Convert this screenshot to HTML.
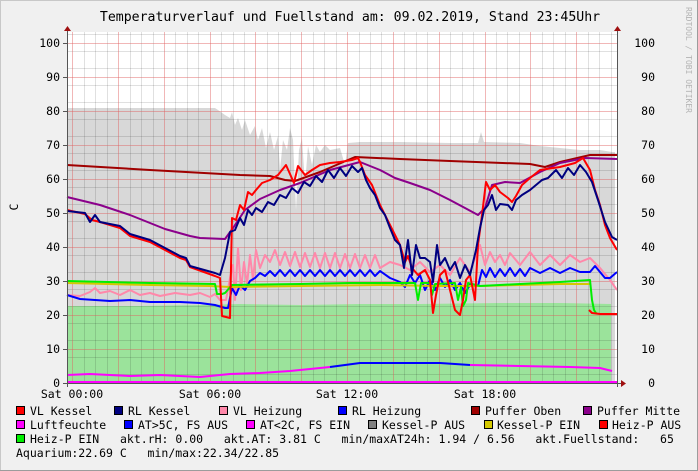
<!DOCTYPE html>
<html><head><meta charset="utf-8"><style>
html,body{margin:0;padding:0;background:#f0f0f0}
svg{display:block}
text{font-family:"DejaVu Sans Mono","Liberation Mono",monospace;fill:#000}
</style></head><body>
<svg width="698" height="471" viewBox="0 0 698 471" xmlns="http://www.w3.org/2000/svg">
<rect x="0" y="0" width="698" height="471" fill="#f0f0f0"/>
<rect x="0.5" y="0.5" width="697" height="470" fill="none" stroke="#c8c8c8"/>
<line x1="0" y1="470.5" x2="698" y2="470.5" stroke="#9c9c9c"/>
<line x1="697.5" y1="0" x2="697.5" y2="471" stroke="#9c9c9c"/>
<text x="350" y="21" font-size="13.2" text-anchor="middle">Temperaturverlauf und Fuellstand am: 09.02.2019, Stand 23:45Uhr</text>
<text transform="translate(686,7) rotate(90)" font-size="8" fill="#b4b4b4" style="fill:#b4b4b4">RRDTOOL / TOBI OETIKER</text>
<rect x="67" y="32" width="550" height="351" fill="#fff"/>
<polygon fill="#d8d8d8" points="67,383 67,108 215,108 218,110 225,115 230,118 232,112 235,125 238,118 242,130 245,120 250,135 255,126 258,140 262,128 266,148 270,132 274,150 278,136 280,170 283,140 287,150 290,128 293,140 296,210 299,150 302,138 305,185 308,146 312,165 316,145 320,152 325,145 330,150 340,148 345,165 348,143 360,142 400,142 450,143 478,143 481,132 484,142 520,143 540,146 560,148 580,150 600,150 612,152 615,152 615,383"/>
<polygon fill="#9be39b" points="67,383 67,306 140,306 200,305 240,304 300,305 360,304 420,304 500,303 560,303 611,304 611,383"/>
<g stroke="#000" stroke-opacity="0.12" stroke-width="1">
<path d="M67,374.5H617M67,357.5H617M67,340.5H617M67,323.5H617M67,306.5H617M67,289.5H617M67,272.5H617M67,255.5H617M67,238.5H617M67,221.5H617M67,204.5H617M67,187.5H617M67,170.5H617M67,153.5H617M67,136.5H617M67,119.5H617M67,102.5H617M67,85.5H617M67,68.5H617M67,51.5H617M67,34.5H617"/>
<path d="M84.5,32V383M95.5,32V383M107.5,32V383M130.5,32V383M141.5,32V383M153.5,32V383M175.5,32V383M187.5,32V383M198.5,32V383M221.5,32V383M233.5,32V383M244.5,32V383M267.5,32V383M278.5,32V383M290.5,32V383M313.5,32V383M324.5,32V383M336.5,32V383M359.5,32V383M370.5,32V383M381.5,32V383M404.5,32V383M416.5,32V383M427.5,32V383M450.5,32V383M462.5,32V383M473.5,32V383M496.5,32V383M507.5,32V383M519.5,32V383M542.5,32V383M553.5,32V383M565.5,32V383M588.5,32V383M599.5,32V383M611.5,32V383"/>
</g>
<g stroke="#e06060" stroke-opacity="0.45" stroke-width="1">
<path d="M67,43.5H617M67,77.5H617M67,111.5H617M67,145.5H617M67,179.5H617M67,213.5H617M67,247.5H617M67,281.5H617M67,315.5H617M67,349.5H617"/>
<path d="M72.5,32V383M118.5,32V383M164.5,32V383M210.5,32V383M255.5,32V383M301.5,32V383M347.5,32V383M393.5,32V383M439.5,32V383M485.5,32V383M530.5,32V383M576.5,32V383"/>
</g>
<g fill="none" stroke-width="2" stroke-linejoin="round">
<polyline stroke="#a00000" points="67,165 150,170 240,175 270,176 285,180 295,181 320,172 355,157 400,159 450,161 530,164 545,167 560,162 590,155 617,155"/>
<polyline stroke="#8b008b" points="67,197 100,205 130,215 165,229 190,236 200,238 225,239 233,228 245,210 260,199 280,190 300,183 330,170 360,162 380,170 395,178 410,183 430,190 450,200 465,208 478,215 485,208 492,185 505,182 520,183 540,172 560,163 585,158 617,159"/>
<polyline stroke="#ff88aa" points="67,295 80,296 90,292 95,288 100,293 110,291 120,295 130,290 140,295 150,293 160,296 175,293 190,295 200,293 210,297 215,294 220,300 226,300 230,278 233,265 235,300 238,248 241,290 244,262 247,285 250,255 253,280 256,250 260,268 265,255 270,262 275,250 280,265 285,252 290,266 295,252 300,267 305,253 310,267 315,253 320,268 325,253 330,268 335,253 340,268 345,254 350,268 355,254 360,268 365,255 370,268 375,255 380,268 390,262 400,265 410,270 420,262 430,272 440,265 450,275 460,258 470,272 480,245 485,265 490,252 495,262 500,255 505,265 510,253 520,265 530,252 540,265 550,255 560,265 570,255 580,262 590,258 600,268 610,280 617,290"/>
<polyline stroke="#0000ff" points="67,295 80,299 95,300 110,301 130,300 150,302 180,302 200,303 215,305 225,308 228,308 232,288 236,295 240,285 245,290 250,281 255,278 260,273 265,276 270,271 275,276 280,270 285,276 290,270 295,276 300,270 305,276 310,270 315,276 320,270 325,276 330,270 335,276 340,270 345,276 350,270 355,276 360,270 365,276 370,270 375,276 380,271 390,278 400,282 405,287 410,275 415,283 420,275 425,290 430,280 435,290 440,278 445,287 450,280 455,290 460,283 465,293 470,285 478,286 482,270 486,277 490,268 495,277 500,269 505,276 510,268 515,276 520,269 525,276 530,268 540,273 550,268 560,273 570,268 580,272 590,272 595,266 600,272 605,278 610,278 617,272"/>
<polyline stroke="#d4c800" points="67,283 150,285 210,286 230,287 300,286 380,285 440,286 480,286 520,285 560,284 590,284"/>
<polyline stroke="#00ee00" points="67,281 150,283 215,284 217,294 222,294 225,293 232,285 300,284 350,283 400,283 415,283 418,300 421,283 430,283 432,295 435,284 455,283 458,300 461,287 463,306 466,300 468,283 480,286 520,284 560,282 590,280 592,300 594,310 596,313"/>
<polyline stroke="#ff0000" points="67,210 85,214 92,220 100,222 120,228 130,236 150,242 165,250 180,258 186,260 190,267 215,276 220,278 222,316 230,318 232,218 236,220 240,205 244,210 248,192 252,195 256,190 262,183 270,180 278,175 286,165 294,183 298,166 305,175 312,170 320,165 330,163 340,162 352,160 358,158 360,162 365,175 372,185 380,205 390,225 400,245 405,262 408,256 412,268 418,275 425,270 430,280 433,313 436,295 440,275 445,270 450,290 455,310 460,315 463,300 466,280 470,275 475,300 478,245 482,215 486,182 490,190 495,185 500,192 508,198 512,202 516,196 522,185 530,178 540,170 560,167 575,163 583,158 590,170 595,190 600,205 605,225 610,238 617,250"/>
<polyline stroke="#ff0000" points="589,310 592,313 600,314 617,314"/>
<polyline stroke="#000080" points="67,211 85,213 90,222 95,215 100,222 120,226 130,234 150,240 165,248 180,256 186,258 190,266 215,273 220,275 225,258 230,232 235,230 240,218 244,225 248,210 252,215 256,208 262,212 268,202 274,205 280,195 286,198 292,188 298,193 304,182 310,186 316,176 322,182 328,170 334,178 340,168 346,176 352,166 358,172 362,168 366,180 370,188 375,195 380,208 385,215 390,228 395,240 400,245 404,268 408,240 412,275 416,245 420,258 425,258 430,262 433,282 437,245 440,265 445,258 450,270 455,262 460,278 465,265 470,275 476,250 480,228 484,210 488,205 492,195 496,210 500,204 508,205 512,210 516,200 522,195 530,190 536,185 542,180 548,178 556,170 562,178 568,168 574,175 580,165 586,172 592,182 598,200 605,222 612,237 617,240"/>
<polyline stroke="#ff00ff" points="67,375 90,374 110,375 130,376 160,375 200,377 230,374 260,373 290,371 310,369 330,367"/>
<polyline stroke="#0000ff" points="330,367 360,363 400,363 440,363 470,365"/>
<polyline stroke="#ff00ff" points="470,365 520,366 570,367 600,368 612,371"/>
<polyline stroke="#ff00ff" points="67,382 617,382"/>
</g>
<line x1="67.5" y1="29" x2="67.5" y2="387" stroke="#555" stroke-width="1"/>
<line x1="617.5" y1="29" x2="617.5" y2="387" stroke="#555" stroke-width="1"/>
<line x1="63" y1="383.5" x2="624" y2="383.5" stroke="#555" stroke-width="1"/>
<polygon points="64,31 71,31 67.5,26" fill="#a01010"/>
<polygon points="614,31 621,31 617.5,26" fill="#a01010"/>
<polygon points="621,380 621,387 626,383.5" fill="#a01010"/>
<g stroke="#555"><path d="M63,43.5h4M63,77.5h4M63,111.5h4M63,145.5h4M63,179.5h4M63,213.5h4M63,247.5h4M63,281.5h4M63,315.5h4M63,349.5h4"/></g>
<g font-size="11.5" text-anchor="end">
<text x="60" y="47">100</text><text x="60" y="81">90</text><text x="60" y="115">80</text><text x="60" y="149">70</text><text x="60" y="183">60</text><text x="60" y="217">50</text><text x="60" y="251">40</text><text x="60" y="285">30</text><text x="60" y="319">20</text><text x="60" y="353">10</text><text x="60" y="387">0</text>
<text x="655" y="47">100</text><text x="655" y="81">90</text><text x="655" y="115">80</text><text x="655" y="149">70</text><text x="655" y="183">60</text><text x="655" y="217">50</text><text x="655" y="251">40</text><text x="655" y="285">30</text><text x="655" y="319">20</text><text x="655" y="353">10</text><text x="655" y="387">0</text>
</g>
<text transform="translate(18,207) rotate(-90)" font-size="11.5" text-anchor="middle">C</text>
<g font-size="11.5" text-anchor="middle">
<text x="72" y="398">Sat 00:00</text><text x="210" y="398">Sat 06:00</text><text x="347" y="398">Sat 12:00</text><text x="485" y="398">Sat 18:00</text>
</g>
<g font-size="11.5" style="white-space:pre">
<g stroke="#000" stroke-width="1">
<rect x="16.5" y="406.5" width="8" height="8" fill="#ff0000"/>
<rect x="114.5" y="406.5" width="8" height="8" fill="#000080"/>
<rect x="219.5" y="406.5" width="8" height="8" fill="#ff88aa"/>
<rect x="338.5" y="406.5" width="8" height="8" fill="#0000ff"/>
<rect x="471.5" y="406.5" width="8" height="8" fill="#a00000"/>
<rect x="583.5" y="406.5" width="8" height="8" fill="#8b008b"/>
<rect x="16.5" y="420.5" width="8" height="8" fill="#ff00ff"/>
<rect x="124.5" y="420.5" width="8" height="8" fill="#0000ff"/>
<rect x="246.5" y="420.5" width="8" height="8" fill="#ff00ff"/>
<rect x="368.5" y="420.5" width="8" height="8" fill="#808080"/>
<rect x="484.5" y="420.5" width="8" height="8" fill="#d4c800"/>
<rect x="599.5" y="420.5" width="8" height="8" fill="#ff0000"/>
<rect x="16.5" y="434.5" width="8" height="8" fill="#00ee00"/>
</g>
<text x="30" y="415">VL Kessel</text>
<text x="128" y="415">RL Kessel</text>
<text x="233" y="415">VL Heizung</text>
<text x="352" y="415">RL Heizung</text>
<text x="485" y="415">Puffer Oben</text>
<text x="597" y="415">Puffer Mitte</text>
<text x="30" y="429">Luftfeuchte</text>
<text x="138" y="429">AT&gt;5C, FS AUS</text>
<text x="260" y="429">AT&lt;2C, FS EIN</text>
<text x="382" y="429">Kessel-P AUS</text>
<text x="497" y="429">Kessel-P EIN</text>
<text x="612" y="429">Heiz-P AUS</text>
<text x="30" y="443" xml:space="preserve">Heiz-P EIN   akt.rH: 0.00   akt.AT: 3.81 C   min/maxAT24h: 1.94 / 6.56   akt.Fuellstand:   65</text>
<text x="16" y="457" xml:space="preserve">Aquarium:22.69 C   min/max:22.34/22.85</text>
</g>
</svg>
</body></html>
